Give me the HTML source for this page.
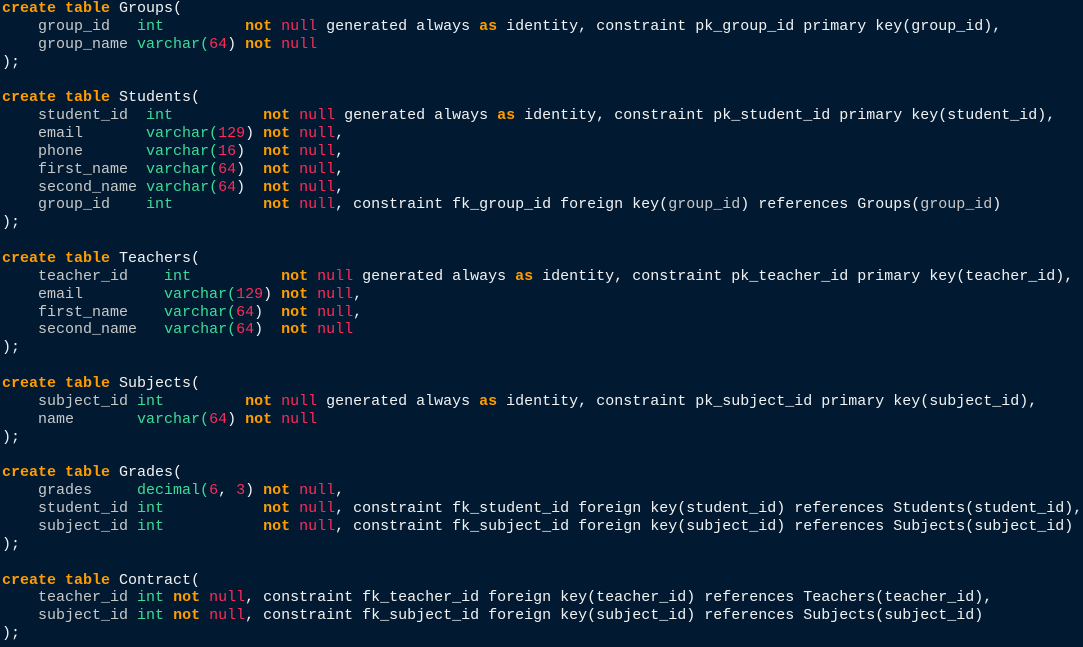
<!DOCTYPE html>
<html><head><meta charset="utf-8"><style>
html,body{margin:0;padding:0;background:#011a31;width:1083px;height:647px;overflow:hidden}
pre{margin:0;padding:0 0 0 2px;font-family:"Liberation Mono",monospace;font-size:15px;line-height:17.86px;color:#f2f2f2;}
.k{color:#ff9d00;font-weight:bold}
.n{color:#ff2a5a}
.t{color:#3ddc97}
.c{color:#c8c8c8}
</style></head><body><pre><span class="k">create table</span> Groups(
    <span class="c">group_id</span>   <span class="t">int</span>         <span class="k">not</span> <span class="n">null</span> generated always <span class="k">as</span> identity, constraint pk_group_id primary key(group_id),
    <span class="c">group_name</span> <span class="t">varchar(</span><span class="n">64</span>) <span class="k">not</span> <span class="n">null</span>
);

<span class="k">create table</span> Students(
    <span class="c">student_id</span>  <span class="t">int</span>          <span class="k">not</span> <span class="n">null</span> generated always <span class="k">as</span> identity, constraint pk_student_id primary key(student_id),
    <span class="c">email</span>       <span class="t">varchar(</span><span class="n">129</span>) <span class="k">not</span> <span class="n">null</span>,
    <span class="c">phone</span>       <span class="t">varchar(</span><span class="n">16</span>)  <span class="k">not</span> <span class="n">null</span>,
    <span class="c">first_name</span>  <span class="t">varchar(</span><span class="n">64</span>)  <span class="k">not</span> <span class="n">null</span>,
    <span class="c">second_name</span> <span class="t">varchar(</span><span class="n">64</span>)  <span class="k">not</span> <span class="n">null</span>,
    <span class="c">group_id</span>    <span class="t">int</span>          <span class="k">not</span> <span class="n">null</span>, constraint fk_group_id foreign key(<span class="c">group_id</span>) references Groups(<span class="c">group_id</span>)
);

<span class="k">create table</span> Teachers(
    <span class="c">teacher_id</span>    <span class="t">int</span>          <span class="k">not</span> <span class="n">null</span> generated always <span class="k">as</span> identity, constraint pk_teacher_id primary key(teacher_id),
    <span class="c">email</span>         <span class="t">varchar(</span><span class="n">129</span>) <span class="k">not</span> <span class="n">null</span>,
    <span class="c">first_name</span>    <span class="t">varchar(</span><span class="n">64</span>)  <span class="k">not</span> <span class="n">null</span>,
    <span class="c">second_name</span>   <span class="t">varchar(</span><span class="n">64</span>)  <span class="k">not</span> <span class="n">null</span>
);

<span class="k">create table</span> Subjects(
    <span class="c">subject_id</span> <span class="t">int</span>         <span class="k">not</span> <span class="n">null</span> generated always <span class="k">as</span> identity, constraint pk_subject_id primary key(subject_id),
    <span class="c">name</span>       <span class="t">varchar(</span><span class="n">64</span>) <span class="k">not</span> <span class="n">null</span>
);

<span class="k">create table</span> Grades(
    <span class="c">grades</span>     <span class="t">decimal(</span><span class="n">6</span>, <span class="n">3</span>) <span class="k">not</span> <span class="n">null</span>,
    <span class="c">student_id</span> <span class="t">int</span>           <span class="k">not</span> <span class="n">null</span>, constraint fk_student_id foreign key(student_id) references Students(student_id),
    <span class="c">subject_id</span> <span class="t">int</span>           <span class="k">not</span> <span class="n">null</span>, constraint fk_subject_id foreign key(subject_id) references Subjects(subject_id)
);

<span class="k">create table</span> Contract(
    <span class="c">teacher_id</span> <span class="t">int</span> <span class="k">not</span> <span class="n">null</span>, constraint fk_teacher_id foreign key(teacher_id) references Teachers(teacher_id),
    <span class="c">subject_id</span> <span class="t">int</span> <span class="k">not</span> <span class="n">null</span>, constraint fk_subject_id foreign key(subject_id) references Subjects(subject_id)
);</pre></body></html>
